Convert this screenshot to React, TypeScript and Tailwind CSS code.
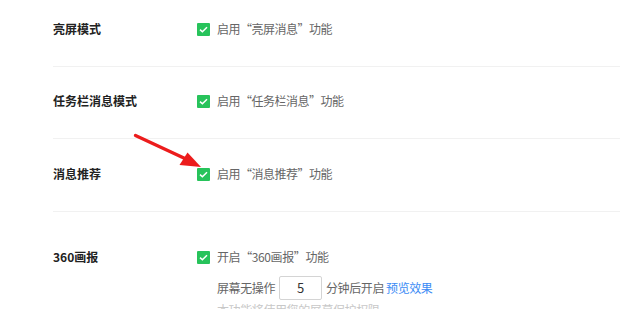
import React from "react";

const rows = [
  { label: "亮屏模式", text: "启用“亮屏消息”功能", pad: "pt-[19px] pb-[27px]" },
  { label: "任务栏消息模式", text: "启用“任务栏消息”功能", pad: "pt-[24px] pb-[27px]" },
  { label: "消息推荐", text: "启用“消息推荐”功能", pad: "pt-[25px] pb-[27px]" },
];

function Check() {
  return (
    <span className="flex h-[13px] w-[13px] shrink-0 items-center justify-center rounded-[1px] bg-[#27c35b]">
      <svg width="9" height="7" viewBox="0 0 9 7" fill="none">
        <path d="M1 3.6 L3.4 5.8 L8 1.2" stroke="#fff" strokeWidth="1.5" />
      </svg>
    </span>
  );
}

export default function App() {
  return (
    <div
      className="relative h-[309px] w-[620px] overflow-hidden bg-white text-[12px]"
      style={{ fontFamily: '"Noto Sans CJK SC", "Noto Sans", sans-serif' }}
    >
      <div className="ml-[53px]">
        {rows.map((r) => (
          <div key={r.label} className={`flex items-center border-b border-[#f1f1f1] ${r.pad}`}>
            <div className="w-[144px] text-[12px] leading-[20px] font-bold text-[#222]">{r.label}</div>
            <div className="flex items-center gap-[7px] leading-[20px] tracking-[-0.5px] text-[#666]">
              <Check />
              <span>{r.text}</span>
            </div>
          </div>
        ))}

        <div className="flex pt-[35px]">
          <div className="w-[144px] text-[12px] leading-[20px] font-bold text-[#222]">360画报</div>
          <div className="flex flex-col leading-[20px] tracking-[-0.4px] text-[#666]">
            <div className="flex items-center gap-[7px]">
              <Check />
              <span>开启“360画报”功能</span>
            </div>
            <div className="mt-[9px] flex items-center pl-[20px]">
              <span>屏幕无操作</span>
              <div className="mx-[4px] flex h-[24px] w-[43px] items-center justify-center rounded-[2px] border border-[#d4d4d4] text-[13px] text-[#333]">
                5
              </div>
              <span>分钟后开启</span>
              <span className="ml-[2px] text-[#3c8cf5]">预览效果</span>
            </div>
            <div className="pl-[20px] text-[#c8c8c8]">本功能将使用您的屏幕保护权限</div>
          </div>
        </div>
      </div>

      <svg className="pointer-events-none absolute left-0 top-0" width="620" height="309">
        <line x1="135.5" y1="135.5" x2="186" y2="159" stroke="#ec1c1c" strokeWidth="3.4" strokeLinecap="round" />
        <polygon points="201,167 179.5,165 187.5,152.5" fill="#ec1c1c" />
      </svg>
    </div>
  );
}
